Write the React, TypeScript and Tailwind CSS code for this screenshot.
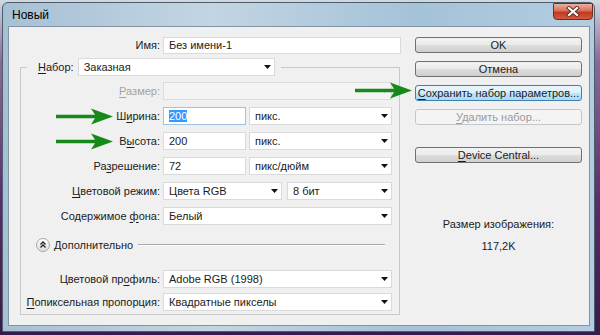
import React from "react";

const Caret = ({ dim = false }: { dim?: boolean }) => (
  <svg width="7" height="4" viewBox="0 0 7 4" className="shrink-0">
    <path d="M0 0h7L3.5 4z" fill={dim ? "#c8c8c8" : "#111"} />
  </svg>
);

const Field = ({
  w,
  children,
  caret = false,
  disabled = false,
  focus = false,
}: {
  w: string;
  children?: React.ReactNode;
  caret?: boolean;
  disabled?: boolean;
  focus?: boolean;
}) => (
  <div
    className={`${w} h-[18px] shrink-0 flex items-center justify-between pl-[5px] pr-[3px] border ${
      disabled
        ? "bg-[#f4f4f4] border-[#dcdcdc]"
        : focus
        ? "bg-white border-[#9dc3e6]"
        : "bg-white border-[#dadada]"
    }`}
  >
    <span className="whitespace-nowrap leading-[14px]">{children}</span>
    {caret && <Caret dim={disabled} />}
  </div>
);

const U = ({ children }: { children: React.ReactNode }) => (
  <span className="underline underline-offset-[2px]">{children}</span>
);

const Row = ({
  label,
  children,
  dim = false,
  className = "",
}: {
  label: React.ReactNode;
  children: React.ReactNode;
  dim?: boolean;
  className?: string;
}) => (
  <div className={`flex items-center h-[18px] ${className}`}>
    <div
      className={`w-[139px] shrink-0 text-right whitespace-nowrap ${
        dim ? "text-[#a3a3a3]" : ""
      }`}
    >
      {label}
    </div>
    <div className="ml-[3px] flex items-center gap-[3px]">{children}</div>
  </div>
);

const Btn = ({
  children,
  kind = "normal",
  className = "",
}: {
  children: React.ReactNode;
  kind?: "normal" | "hover" | "disabled";
  className?: string;
}) => {
  const cls =
    kind === "hover"
      ? "border-[#3c7fb1] bg-[linear-gradient(to_bottom,#eaf6fd_0%,#d9f0fc_50%,#bee6fd_51%,#a7d9f5_100%)] text-[#1b1b1b]"
      : kind === "disabled"
      ? "border-[#c4c7c9] bg-[#f4f4f4] text-[#9a9a9a]"
      : "border-[#707070] bg-[linear-gradient(to_bottom,#f2f2f2_0%,#ebebeb_50%,#dddddd_51%,#cfcfcf_100%)] text-[#1b1b1b]";
  return (
    <div
      className={`h-[16px] w-[167px] rounded-[3px] border flex items-center justify-center leading-none ${cls} ${className}`}
    >
      {children}
    </div>
  );
};

const GreenArrow = ({ className }: { className: string }) => (
  <svg
    width="57"
    height="17"
    viewBox="0 0 57 17"
    className={`absolute ${className}`}
  >
    <path
      d="M0 6.8 H39 L35 0.5 L57 8.5 L35 16.5 L39 10.2 H0 Z"
      fill="#17891b"
    />
  </svg>
);

export default function App() {
  return (
    <div className="relative w-[600px] h-[335px] overflow-hidden bg-[linear-gradient(to_bottom,#cfd9e2_0%,#8a6a9a_18%,#5a2c6b_60%,#3a1a48_100%)] font-['Liberation_Sans','Arial',sans-serif] text-[11px] text-[#1b1b1b]">
      <div className="ml-[2px] mt-[2px] w-[593px] h-[330px] flex flex-col border border-[#4e5d6b] rounded-t-[6px] bg-[linear-gradient(to_right,#a6c0d4_0%,#c3d5e3_35%,#a4c2d8_70%,#b3cde0_100%)]">
        {/* title bar */}
        <div className="h-[23px] flex items-start">
          <div className="self-center ml-[9px] text-[12px] text-black">Новый</div>
          <div className="ml-auto mr-[1px] mt-[0px] w-[40px] h-[17px] rounded-b-[4px] rounded-t-[1px] border border-[#6e2b20] bg-[linear-gradient(to_bottom,#eab0a2_0%,#d9705b_45%,#c4391f_55%,#d2593f_100%)] flex items-center justify-center">
            <svg width="14" height="11" viewBox="0 0 14 11">
              <path
                d="M3 2 L11 9 M11 2 L3 9"
                stroke="#5a2a24"
                strokeWidth="4"
                strokeLinecap="square"
              />
              <path
                d="M3 2 L11 9 M11 2 L3 9"
                stroke="#ffffff"
                strokeWidth="2.2"
                strokeLinecap="square"
              />
            </svg>
          </div>
        </div>
        {/* client */}
        <div className="ml-[5px] mr-[4px] h-[300px] border border-[#8294a3] bg-[#f0f0f0] flex">
          {/* left */}
          <div className="w-[393px] shrink-0 flex flex-col">
            <div className="mt-[10px] flex items-center h-[17px]">
              <div className="w-[151px] text-right">Имя:</div>
              <div className="ml-[3px] w-[238px] h-[17px] bg-white border border-[#dadada] pl-[5px] flex items-center">
                Без имени-1
              </div>
            </div>
            <fieldset className="ml-[11px] mt-[4px] w-[380px] border border-[#c9c9c9] pb-[3px]">
              <legend className="ml-[6px] pl-[11px] pr-[6px]">
                <div className="flex items-center h-[18px]">
                  <span>
                    <U>Н</U>абор:
                  </span>
                  <div className="ml-[4px]">
                    <Field w="w-[197px]" caret>
                      Заказная
                    </Field>
                  </div>
                </div>
              </legend>
              <div className="mt-[6px] flex flex-col gap-[7px]">
                <Row
                  dim
                  label={
                    <>
                      <U>Р</U>азмер:
                    </>
                  }
                >
                  <Field w="w-[229px]" caret disabled />
                </Row>
                <Row
                  label={
                    <>
                      Ш<U>и</U>рина:
                    </>
                  }
                >
                  <Field w="w-[83px]" focus>
                    <span className="bg-[#3399ff] text-white">200</span>
                  </Field>
                  <Field w="w-[143px]" caret>
                    пикс.
                  </Field>
                </Row>
                <Row
                  label={
                    <>
                      В<U>ы</U>сота:
                    </>
                  }
                >
                  <Field w="w-[83px]">200</Field>
                  <Field w="w-[143px]" caret>
                    пикс.
                  </Field>
                </Row>
                <Row
                  label={
                    <>
                      Ра<U>з</U>решение:
                    </>
                  }
                >
                  <Field w="w-[83px]">72</Field>
                  <Field w="w-[143px]" caret>
                    пикс/дюйм
                  </Field>
                </Row>
                <Row
                  label={
                    <>
                      <U>Ц</U>ветовой режим:
                    </>
                  }
                >
                  <Field w="w-[119px]" caret>
                    Цвета RGB
                  </Field>
                  <div className="ml-[2px]">
                    <Field w="w-[105px]" caret>
                      8 бит
                    </Field>
                  </div>
                </Row>
                <Row
                  label={
                    <>
                      Содержимое <U>ф</U>она:
                    </>
                  }
                >
                  <Field w="w-[229px]" caret>
                    Белый
                  </Field>
                </Row>
              </div>
              <div className="mt-[13px] h-[14px] flex items-center">
                <svg width="14" height="14" viewBox="0 0 14 14" className="ml-[15px] shrink-0">
                  <defs>
                    <linearGradient id="cg" x1="0" y1="0" x2="0" y2="1">
                      <stop offset="0" stopColor="#ffffff" />
                      <stop offset="1" stopColor="#dcdcdc" />
                    </linearGradient>
                  </defs>
                  <circle cx="7" cy="7" r="6.5" fill="url(#cg)" stroke="#a8a8a8" />
                  <path
                    d="M4.5 6.5 L7 4 L9.5 6.5 M4.5 9.5 L7 7 L9.5 9.5"
                    fill="none"
                    stroke="#222"
                    strokeWidth="1.3"
                  />
                </svg>
                <span className="ml-[4px] whitespace-nowrap">Дополнительно</span>
                <div className="ml-[5px] mr-[14px] flex-1 h-[2px] border-t border-[#a8a8a8] border-b border-b-white" />
              </div>
              <Row
                className="mt-[18px]"
                label={
                  <>
                    Цветовой пр<U>о</U>филь:
                  </>
                }
              >
                <Field w="w-[229px]" caret>
                  Adobe RGB (1998)
                </Field>
              </Row>
              <Row
                className="mt-[5px]"
                label={
                  <>
                    <U>П</U>опиксельная пропорция:
                  </>
                }
              >
                <Field w="w-[229px]" caret>
                  Квадратные пикселы
                </Field>
              </Row>
            </fieldset>
          </div>
          {/* right */}
          <div className="ml-[13px] pt-[10px] flex flex-col items-center w-[167px]">
            <div className="flex flex-col gap-[8px]">
              <Btn>OK</Btn>
              <Btn>Отмена</Btn>
              <Btn kind="hover">
                <span>
                  <U>С</U>охранить набор параметров...
                </span>
              </Btn>
              <Btn kind="disabled">
                <span>
                  <U>У</U>далить набор...
                </span>
              </Btn>
            </div>
            <Btn className="mt-[22px]">
              <span>
                <U>D</U>evice Central...
              </span>
            </Btn>
            <div className="mt-[55px] leading-[13px]">Размер изображения:</div>
            <div className="mt-[9px] leading-[13px]">117,2K</div>
          </div>
        </div>
      </div>
      <GreenArrow className="left-[355px] top-[82px]" />
      <GreenArrow className="left-[56px] top-[108px]" />
      <GreenArrow className="left-[56px] top-[133px]" />
    </div>
  );
}
